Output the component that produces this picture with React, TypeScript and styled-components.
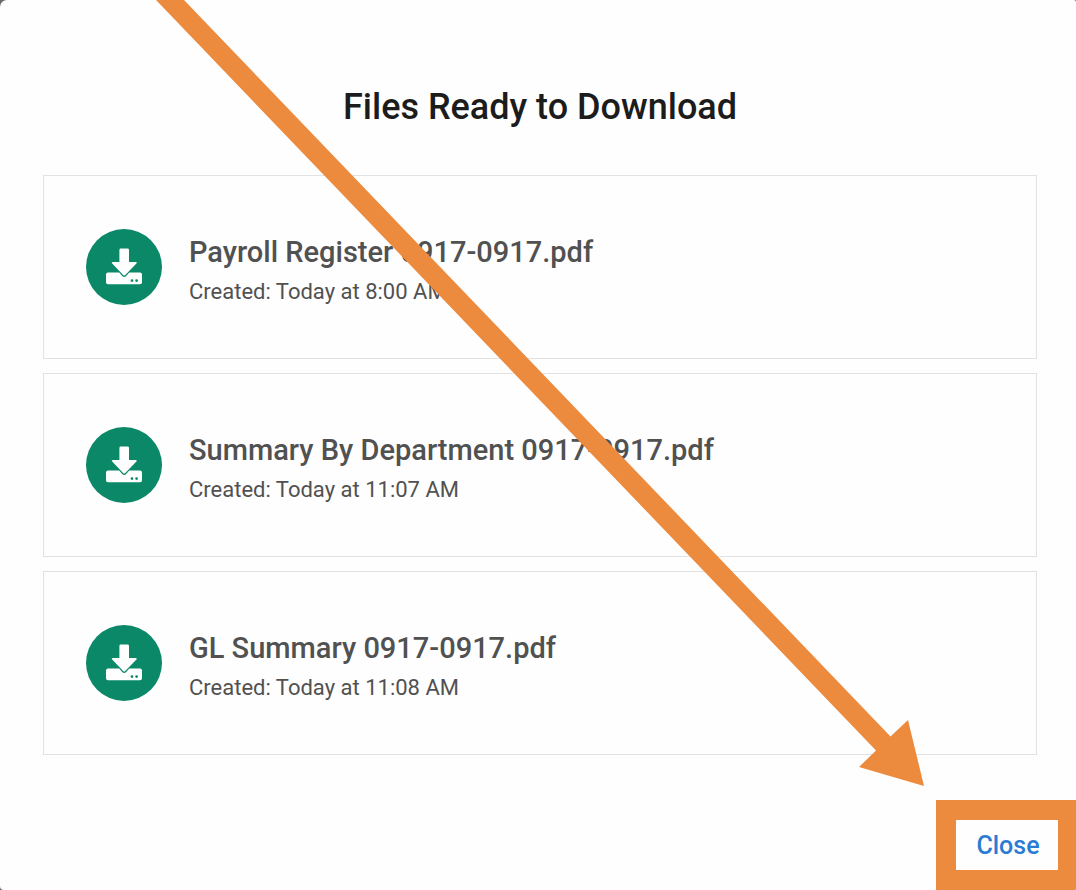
import React from "react";
import styled, { createGlobalStyle } from "styled-components";

const GlobalStyle = createGlobalStyle`
  *, *::before, *::after { box-sizing: border-box; }
  body {
    margin: 0;
    background: #6b6b6b;
    font-family: Roboto, "Liberation Sans", sans-serif;
  }
`;

const Dialog = styled.main`
  position: relative;
  display: flex;
  flex-direction: column;
  min-height: 100vh;
  overflow: hidden;
  background: #fefefe;
  border-radius: 7px 2px 2px 4px;
`;

const Title = styled.h1`
  margin: 0;
  padding: 83px 39px 44px 43px;
  font-size: 36px;
  line-height: 48px;
  font-weight: 500;
  text-align: center;
  color: #1c1c1c;
`;

const FileList = styled.ul`
  display: flex;
  flex-direction: column;
  gap: 14px;
  margin: 0;
  padding: 0 39px 0 43px;
  list-style: none;
`;

const FileCard = styled.li`
  display: flex;
  align-items: center;
  gap: 27px;
  min-height: 184px;
  padding: 0 42px;
  border: 1px solid #e2e2e2;
`;

const DownloadButton = styled.button`
  display: flex;
  align-items: center;
  justify-content: center;
  flex: none;
  width: 76px;
  height: 76px;
  padding: 0;
  border: 0;
  border-radius: 50%;
  background: #0a8868;
  color: #fefefe;
  cursor: pointer;
`;

const FileText = styled.div`
  display: flex;
  flex-direction: column;
  gap: 6px;
  padding-top: 4px;
  color: #515151;
`;

const FileName = styled.h2`
  margin: 0;
  font-size: 29px;
  line-height: 40px;
  font-weight: 500;
`;

const FileDate = styled.p`
  margin: 0;
  font-size: 22px;
  line-height: 28px;
`;

const Footer = styled.footer`
  display: flex;
  justify-content: flex-end;
  padding-top: 45px;
`;

const Highlight = styled.div`
  border: solid #ec8a3d;
  border-width: 20px 18px 20px 20px;
`;

const CloseButton = styled.button`
  display: block;
  width: 102px;
  height: 50px;
  padding: 2px 0 0 2px;
  border: 0;
  background: #fefefe;
  font: 500 25px/48px Roboto, "Liberation Sans", sans-serif;
  color: #2a7bd3;
  cursor: pointer;
`;

const Arrow = styled.svg`
  position: absolute;
  top: 0;
  left: 0;
  pointer-events: none;
`;

const files = [
  { name: "Payroll Register 0917-0917.pdf", created: "Today at 8:00 AM" },
  { name: "Summary By Department 0917-0917.pdf", created: "Today at 11:07 AM" },
  { name: "GL Summary 0917-0917.pdf", created: "Today at 11:08 AM" },
];

function DownloadIcon() {
  return (
    <svg width="76" height="76" viewBox="0 0 76 76" aria-hidden="true">
      <path
        fill="currentColor"
        d="M34.8 19.500h6.800q1.400 0 1.400 1.400V33h6.600q2 0 .8 1.600L39.300 46q-1.100 1.100-2.200 0L26.200 34.600Q25 33 27 33h6.400V20.900q0-1.400 1.400-1.400Z"
      />
      <path
        fill="currentColor"
        fillRule="evenodd"
        d="M22 43.500h11.200l3 3.500q2 1.800 4 0l3-3.500H54q2 0 2 2v7.700q0 2-2 2H22q-2 0-2-2V45.500q0-2 2-2Zm24 6.700a1.400 1.400 0 1 0 0 2.800a1.400 1.400 0 0 0 0-2.800Zm4.600 0a1.400 1.400 0 1 0 0 2.800a1.400 1.400 0 0 0 0-2.800Z"
      />
    </svg>
  );
}

export default function App() {
  return (
    <>
      <GlobalStyle />
      <Dialog>
        <Title>Files Ready to Download</Title>
        <FileList>
          {files.map((file) => (
            <FileCard key={file.name}>
              <DownloadButton type="button" aria-label={`Download ${file.name}`}>
                <DownloadIcon />
              </DownloadButton>
              <FileText>
                <FileName>{file.name}</FileName>
                <FileDate>Created: {file.created}</FileDate>
              </FileText>
            </FileCard>
          ))}
        </FileList>
        <Footer>
          <Highlight>
            <CloseButton type="button">Close</CloseButton>
          </Highlight>
        </Footer>
        <Arrow width="924" height="786" viewBox="0 0 924 786" aria-hidden="true">
          <path fill="#ec8a3d" d="M156 0H184L890.500 736.500L908 720L924 786L859 767L876 750.500Z" />
        </Arrow>
      </Dialog>
    </>
  );
}
